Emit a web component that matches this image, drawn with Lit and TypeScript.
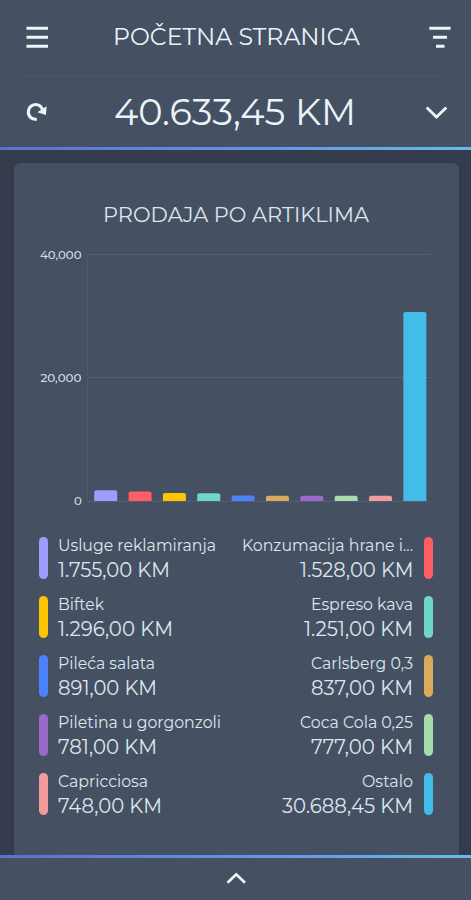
import { LitElement, html, css, svg } from "lit";
import { customElement, property } from "lit/decorators.js";

interface Item {
  name: string;
  amount: string;
  value: number;
  color: string;
  nameWidth: number;
  amountWidth: number;
}

const items: Item[] = [
  { name: "Usluge reklamiranja", amount: "1.755,00 KM", value: 1755, color: "#a29bfe", nameWidth: 158, amountWidth: 112 },
  { name: "Konzumacija hrane i...", amount: "1.528,00 KM", value: 1528, color: "#ff5f62", nameWidth: 171, amountWidth: 113.5 },
  { name: "Biftek", amount: "1.296,00 KM", value: 1296, color: "#fdc500", nameWidth: 46, amountWidth: 115 },
  { name: "Espreso kava", amount: "1.251,00 KM", value: 1251, color: "#6ed8c8", nameWidth: 102, amountWidth: 109 },
  { name: "Pileća salata", amount: "891,00 KM", value: 891, color: "#4b82fb", nameWidth: 97, amountWidth: 99 },
  { name: "Carlsberg 0,3", amount: "837,00 KM", value: 837, color: "#dcab5a", nameWidth: 102, amountWidth: 102 },
  { name: "Piletina u gorgonzoli", amount: "781,00 KM", value: 781, color: "#9a69ca", nameWidth: 163, amountWidth: 99 },
  { name: "Coca Cola 0,25", amount: "777,00 KM", value: 777, color: "#a5dbad", nameWidth: 113, amountWidth: 102 },
  { name: "Capricciosa", amount: "748,00 KM", value: 748, color: "#f29a9c", nameWidth: 90, amountWidth: 104 },
  { name: "Ostalo", amount: "30.688,45 KM", value: 30688.45, color: "#42bce8", nameWidth: 51, amountWidth: 131 },
];

/* A single line of text set to a given measure. */
@customElement("text-line")
class TextLine extends LitElement {
  @property() text = "";
  @property({ type: Number }) width = 100;
  @property({ type: Number }) size = 16;

  static styles = css`
    :host { display: block; flex: none; line-height: 0; }
    svg { display: block; overflow: visible; }
    text { font-family: Montserrat, Inter, sans-serif; fill: currentColor; }
  `;

  render() {
    const h = Math.round(this.size * 1.2);
    return html`<svg width=${this.width} height=${h}>
      <text x="0" y=${this.size * 0.93} font-size=${this.size} textLength=${this.width}
        lengthAdjust="spacingAndGlyphs">${this.text}</text>
    </svg>`;
  }
}

@customElement("sales-chart")
class SalesChart extends LitElement {
  static styles = css`
    :host { display: block; }
    svg { display: block; }
    text { font-family: Montserrat, Inter, sans-serif; font-size: 11.8px; font-weight: 500; fill: #d5dfe7; }
    .grid { stroke: #535e6f; fill: none; }
    .axis { stroke: #4f5a6b; }
  `;

  private bar(item: Item, i: number) {
    const x = 80.2 + i * 34.35;
    const h = Math.max(5.3, (item.value / 40000) * 246.5);
    const top = 257 - h;
    return svg`<path fill=${item.color}
      d="M${x} 257V${top + 2}q0-2 2-2h19q2 0 2 2V257z"/>`;
  }

  render() {
    return html`<svg width="445" height="270" viewBox="0 0 445 270">
      <path class="grid" d="M74 10.5H417M74 133.5H418M74 257.5H417"/>
      <path class="axis" d="M73.5 11V257"/>
      <text x="26" y="15" textLength="41.5" lengthAdjust="spacingAndGlyphs">40,000</text>
      <text x="26.5" y="138" textLength="41" lengthAdjust="spacingAndGlyphs">20,000</text>
      <text x="60" y="261.3">0</text>
      ${items.map((item, i) => this.bar(item, i))}
    </svg>`;
  }
}

@customElement("app-root")
class AppRoot extends LitElement {
  static styles = css`
    :host {
      display: flex; flex-direction: column; height: 900px; overflow: hidden;
      background: #353c4d; color: #eaf3fa;
    }
    * { box-sizing: border-box; }
    svg { display: block; flex: none; }
    .header { flex: none; height: 147px; background: #455062; padding: 0 24px; }
    .row { display: flex; align-items: center; justify-content: space-between; }
    .title { height: 76px; padding: 0 0 1px 1px; border-bottom: 1px solid #4b5667; }
    .title svg:last-child { margin-right: -5px; }
    .title text-line { margin-left: -4px; }
    .total { height: 71px; padding: 1px 0 0 1px; }
    .total svg:last-child { margin-right: -1px; }
    .total text-line { margin-left: -4px; }
    .line { flex: none; height: 3px; background: linear-gradient(90deg, #5b70d2, #6392e3 50%, #67baed); }
    .body { flex: 1; min-height: 0; padding: 13px 12px 0 14px; }
    .card {
      height: 100%; border-radius: 6px 6px 0 0; background: #455062;
      box-shadow: 0 0 3px #2d394a; color: #dbe6ee; padding-top: 39px;
    }
    .heading { display: flex; padding-left: 89px; height: 42px; }
    .legend {
      display: grid; grid-template-columns: 1fr 1fr; row-gap: 17px;
      padding: 22px 26px 0 25px;
    }
    .entry { display: flex; gap: 10px; height: 42px; }
    .entry.end { flex-direction: row-reverse; gap: 11px; }
    .swatch { width: 9px; height: 42px; margin-top: 1px; border-radius: 5px; flex: none; }
    .labels { display: flex; flex-direction: column; gap: 3px; }
    .end .labels { align-items: flex-end; }
    .footer {
      flex: none; height: 42px; background: #455062; display: flex;
      justify-content: center; padding-top: 11px;
    }
  `;

  render() {
    return html`
      <div class="header">
        <div class="row title">
          <svg width="24" height="24" viewBox="0 0 24 24" stroke="#edf5f8" stroke-width="3">
            <path d="M1.5 3.3H23M1.5 12.3H23M1.5 21.3H23"/>
          </svg>
          <text-line text="POČETNA STRANICA" width="247" size="23.5"></text-line>
          <svg width="24" height="24" viewBox="0 0 24 24" stroke="#edf5f8" stroke-width="3">
            <path d="M1.3 3.3H22.6M5 12.3H19M8 21.3H16.5"/>
          </svg>
        </div>
        <div class="row total">
          <svg width="24" height="24" viewBox="0 0 24 24">
            <path d="M11.8 19.1C7 20 3.3 16.5 3.3 12 3.3 7.6 6.6 4.5 10.6 4.5c3.2 0 5.6 1.7 6.9 5" fill="none" stroke="#edf5f8" stroke-width="3.2"/>
            <path d="M21.6 6.2 21 15 12.4 12.2z" fill="#edf5f8"/>
          </svg>
          <text-line text="40.633,45 KM" width="242" size="37.3"></text-line>
          <svg width="24" height="24" viewBox="0 0 24 24">
            <path d="M2.7 7.5 12.5 17 22.3 7.5" fill="none" stroke="#edf5f8" stroke-width="2.8"/>
          </svg>
        </div>
      </div>
      <div class="line"></div>
      <div class="body">
        <div class="card">
          <div class="heading">
            <text-line text="PRODAJA PO ARTIKLIMA" width="266" size="21.3"></text-line>
          </div>
          <sales-chart></sales-chart>
          <div class="legend">
            ${items.map((item, i) => html`
              <div class="entry ${i % 2 ? "end" : ""}">
                <div class="swatch" style="background:${item.color}"></div>
                <div class="labels">
                  <text-line .text=${item.name} .width=${item.nameWidth} .size=${16}></text-line>
                  <text-line .text=${item.amount} .width=${item.amountWidth} .size=${20.3}></text-line>
                </div>
              </div>`)}
          </div>
        </div>
      </div>
      <div class="line"></div>
      <div class="footer">
        <svg width="22" height="18" viewBox="0 0 22 18">
          <path d="M2.5 13.8 11.2 5.3 20 13.8" fill="none" stroke="#edf5f8" stroke-width="2.7"/>
        </svg>
      </div>
    `;
  }
}
